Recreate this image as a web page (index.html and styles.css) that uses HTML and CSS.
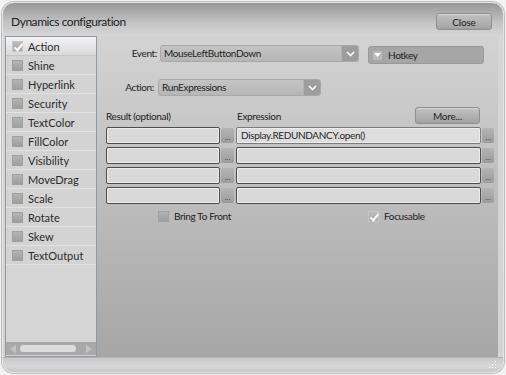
FILE: index.html
```html
<!DOCTYPE html>
<html lang="en">
<head>
    <meta charset="UTF-8">
    <title>Dynamics configuration</title>
    <link rel="stylesheet" href="styles.css">
</head>
<body>
    <div class="window">
        <div class="titlebar">
            <span class="title">Dynamics configuration</span>
            <button class="btn close-btn">Close</button>
        </div>

        <div class="body">
            <div class="sidebar">
                <ul class="dyn-list">
                    <li class="dyn-item active"><span class="chk checked"></span>Action</li>
                    <li class="dyn-item"><span class="chk"></span>Shine</li>
                    <li class="dyn-item"><span class="chk"></span>Hyperlink</li>
                    <li class="dyn-item"><span class="chk"></span>Security</li>
                    <li class="dyn-item"><span class="chk"></span>TextColor</li>
                    <li class="dyn-item"><span class="chk"></span>FillColor</li>
                    <li class="dyn-item"><span class="chk"></span>Visibility</li>
                    <li class="dyn-item"><span class="chk"></span>MoveDrag</li>
                    <li class="dyn-item"><span class="chk"></span>Scale</li>
                    <li class="dyn-item"><span class="chk"></span>Rotate</li>
                    <li class="dyn-item"><span class="chk"></span>Skew</li>
                    <li class="dyn-item"><span class="chk"></span>TextOutput</li>
                </ul>
                <div class="hscroll">
                    <span class="arrow-l"></span>
                    <span class="thumb"></span>
                    <span class="arrow-r"></span>
                </div>
            </div>

            <div class="main">
                <div class="form-row event-row">
                    <label class="lbl event-lbl">Event:</label>
                    <div class="select event-select">
                        <span class="select-text">MouseLeftButtonDown</span>
                        <span class="select-btn"><svg width="9" height="6" viewBox="0 0 9 6"><path d="M1 1 L4.5 4.5 L8 1" fill="none" stroke="#fff" stroke-width="1.6"/></svg></span>
                    </div>
                    <div class="hotkey">
                        <span class="hotkey-btn"><svg width="7" height="4" viewBox="0 0 7 4"><path d="M0 0 H7 L3.5 4 Z" fill="#fff"/></svg></span>
                        Hotkey
                    </div>
                </div>

                <div class="form-row action-row">
                    <label class="lbl action-lbl">Action:</label>
                    <div class="select action-select">
                        <span class="select-text">RunExpressions</span>
                        <span class="select-btn"><svg width="9" height="6" viewBox="0 0 9 6"><path d="M1 1 L4.5 4.5 L8 1" fill="none" stroke="#fff" stroke-width="1.6"/></svg></span>
                    </div>
                </div>

                <div class="expr-head">
                    <span class="col-result">Result (optional)</span>
                    <span class="col-expr">Expression</span>
                    <button class="btn more-btn">More...</button>
                </div>

                <div class="expr-grid">
                    <div class="tbox"></div><span class="dots">...</span>
                    <div class="tbox first">Display.REDUNDANCY.open()</div><span class="dots">...</span>

                    <div class="tbox"></div><span class="dots">...</span>
                    <div class="tbox"></div><span class="dots">...</span>

                    <div class="tbox"></div><span class="dots">...</span>
                    <div class="tbox"></div><span class="dots">...</span>

                    <div class="tbox"></div><span class="dots">...</span>
                    <div class="tbox"></div><span class="dots">...</span>
                </div>

                <div class="options">
                    <span class="opt bring"><span class="chk"></span>Bring To Front</span>
                    <span class="opt focus"><span class="chk checked"></span>Focusable</span>
                </div>
            </div>
        </div>

        <div class="footer">
            <span class="grip"></span>
        </div>
    </div>
</body>
</html>
```

FILE: styles.css
```css
body {
    margin: 0;
    background: #f2f2f2;
    font-family: 'Lato', 'Open Sans', sans-serif;
    color: #222;
}

.window {
    box-sizing: border-box;
    width: 502px;
    height: 371px;
    margin: 2px;
    border: 1px solid #e4e4e4;
    border-radius: 12px;
    background: linear-gradient(#979797 0, #c4c4c4 20px, #d6d6d6 33px, #d3d3d3 100%);
    box-shadow: 0 0 0 1px #bdbdbd;
    padding: 0 5px 0 2px;
    display: flex;
    flex-direction: column;
    overflow: hidden;
}

/* title bar */

.titlebar {
    height: 33px;
    display: flex;
    align-items: center;
    justify-content: space-between;
    padding-left: 6px;
}

.title {
    font-size: 12px;
    letter-spacing: -0.45px;
    color: #1e1e1e;
    margin-top: 3px;
}

.btn {
    font-family: inherit;
    font-size: 10px;
    letter-spacing: -0.2px;
    color: #222;
    border: 1px solid #8e8e8e;
    border-radius: 3px;
    background: linear-gradient(#c2c2c2, #a2a2a2);
    padding: 0;
    height: 17px;
    box-shadow: inset 0 1px 0 rgba(255,255,255,0.35);
}

.close-btn {
    width: 56px;
    margin-top: 4px;
    margin-right: 6px;
}

/* body */

.body {
    flex: 1;
    display: flex;
    min-height: 0;
}

.sidebar {
    box-sizing: border-box;
    width: 92px;
    border: 1px solid #8c99a7;
    background: #d5d5d5;
    display: flex;
    flex-direction: column;
}

.dyn-list {
    list-style: none;
    margin: 0;
    padding: 0;
    flex: 1;
}

.dyn-item {
    height: 18px;
    border-bottom: 1px solid #e2e2e2;
    background: #d3d3d3;
    display: flex;
    align-items: center;
    font-size: 11px;
    color: #2a2a2a;
    padding-left: 6px;
}

.dyn-item.active {
    background: linear-gradient(#f4f4f4, #d9d9d9);
    border-bottom-color: #c4c4c4;
}

.chk {
    width: 11px;
    height: 11px;
    box-sizing: border-box;
    border: 1px solid #a0a0a0;
    background: linear-gradient(#b4b4b4, #9e9e9e);
    margin-right: 5px;
    position: relative;
    flex: none;
}

.chk.checked {
    background: linear-gradient(#bcbcbc, #a8a8a8);
    border-color: #c6c6c6;
}

.chk.checked::after {
    content: "";
    position: absolute;
    left: 3px;
    top: 0;
    width: 3px;
    height: 7px;
    border: solid #fff;
    border-width: 0 2px 2px 0;
    transform: rotate(40deg);
}

.hscroll {
    height: 13px;
    background: #a9a9a9;
    display: flex;
    align-items: center;
    padding: 0 4px;
    gap: 4px;
    margin-bottom: 1px;
}

.arrow-l, .arrow-r {
    width: 0;
    height: 0;
    border-top: 4px solid transparent;
    border-bottom: 4px solid transparent;
}

.arrow-l {
    border-right: 6px solid #c4c4c4;
}

.arrow-r {
    border-left: 6px solid #c4c4c4;
    margin-left: auto;
}

.thumb {
    width: 56px;
    height: 7px;
    border-radius: 4px;
    background: #dcdcdc;
}

/* main panel */

.main {
    flex: 1;
    background: linear-gradient(#d3d3d3, #a6a6a6);
    font-size: 10px;
    letter-spacing: -0.35px;
    padding: 9px 0 0 9px;
}

.form-row {
    display: flex;
    align-items: flex-start;
}

.lbl {
    text-align: right;
    line-height: 17px;
}

.event-lbl {
    width: 51px;
    margin-right: 3px;
}

.action-lbl {
    width: 48px;
    margin-right: 4px;
}

.select {
    box-sizing: border-box;
    height: 17px;
    border: 1px solid #a8a8a8;
    border-radius: 3px;
    background: linear-gradient(#c4c4c4, #b6b6b6);
    display: flex;
    align-items: stretch;
}

.select-text {
    flex: 1;
    padding-left: 3px;
    line-height: 15px;
}

.select-btn {
    width: 16px;
    background: #9d9d9d;
    border-left: 1px solid #b2b2b2;
    border-radius: 0 2px 2px 0;
    display: flex;
    align-items: center;
    justify-content: center;
}

.event-select {
    width: 199px;
}

.hotkey {
    box-sizing: border-box;
    width: 116px;
    height: 18px;
    margin-left: 9px;
    margin-top: 1px;
    border: 1px solid #999;
    border-radius: 3px;
    background: #a6a6a6;
    display: flex;
    align-items: center;
    gap: 6px;
    padding-left: 4px;
}

.hotkey-btn {
    width: 9px;
    height: 9px;
    background: #b9b9b9;
    display: flex;
    align-items: center;
    justify-content: center;
}

.action-row {
    margin-top: 15px;
}

.action-select {
    width: 163px;
}

.expr-head {
    display: flex;
    align-items: center;
    margin-top: 11px;
    height: 17px;
}

.col-result {
    width: 131px;
}

.more-btn {
    width: 65px;
    margin-left: auto;
    margin-right: 18px;
}

.expr-grid {
    display: grid;
    grid-template-columns: 114px 16px 246px 12px;
    grid-auto-rows: 17px;
    row-gap: 3px;
    margin-top: 3px;
}

.tbox {
    box-sizing: border-box;
    border: 1px solid #4d4d4d;
    border-radius: 2px;
    background: #d9d9d9;
    box-shadow: inset 0 0 0 1px #ececec;
    line-height: 15px;
    padding-left: 4px;
    color: #1e1e1e;
}

.tbox.first {
    border-color: #7c7c7c;
    background: #dedede;
}

.expr-grid .tbox:nth-child(4n+3) {
    margin-right: 1px;
}

.dots {
    margin-top: 1px;
    height: 15px;
    border-radius: 2px;
    background: linear-gradient(#b4b4b4, #9c9c9c);
    color: #444;
    font-size: 8px;
    letter-spacing: 0;
    text-align: center;
    line-height: 18px;
}

.expr-grid .dots:nth-child(4n+2) {
    width: 13px;
    margin-left: 1px;
}

.options {
    display: flex;
    margin-top: 6px;
    padding-left: 52px;
}

.opt {
    display: flex;
    align-items: center;
}

.bring {
    width: 210px;
}

/* footer */

.footer {
    height: 14px;
    background: linear-gradient(#c8c8c8, #d8d8d8 60%, #c6c6c6);
    border-top: 1px solid #b4b4b4;
    margin: 0 -5px 0 -2px;
    position: relative;
}

.grip {
    position: absolute;
    right: 7px;
    bottom: 4px;
    width: 8px;
    height: 8px;
    background:
        radial-gradient(circle, #fff 0.8px, transparent 1px) 0 0 / 3px 3px;
    clip-path: polygon(100% 0, 100% 100%, 0 100%);
}
```
